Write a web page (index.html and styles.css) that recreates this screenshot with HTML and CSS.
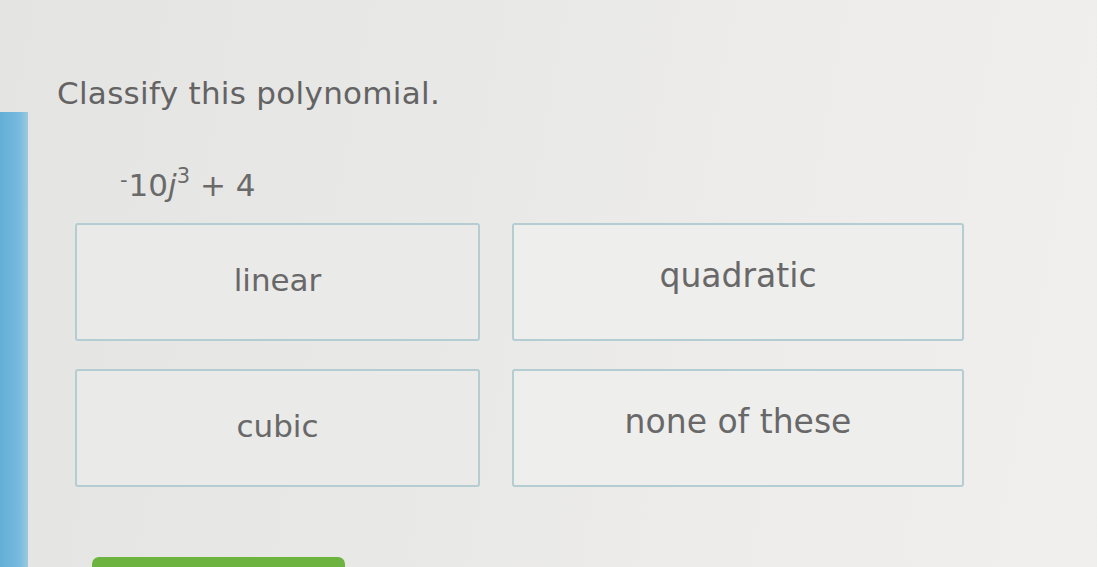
FILE: index.html
```html
<!DOCTYPE html>
<html lang="en">
<head>
  <meta charset="UTF-8">
  <meta name="viewport" content="width=device-width, initial-scale=1.0">
  <title>Classify this polynomial</title>
  <link rel="stylesheet" href="styles.css">
</head>
<body>
  <div class="page">
    <div class="side-strip"></div>

    <div class="question">
      <h1 class="prompt">Classify this polynomial.</h1>

      <!-- Expression -->
      <p class="expression"><sup class="neg">-</sup>10<i>j</i><sup>3</sup> + 4</p>

      <!-- Answer choices -->
      <div class="choices">
        <button class="choice">linear</button>
        <button class="choice">quadratic</button>
        <button class="choice">cubic</button>
        <button class="choice">none of these</button>
      </div>

      <button class="submit-btn" aria-label="Submit"></button>
    </div>
  </div>
</body>
</html>
```

FILE: styles.css
```css
/* Reset and General Styling */
* {
  margin: 0;
  padding: 0;
  box-sizing: border-box;
}

html,
body {
  height: 100%;
  overflow: hidden;
}

body {
  font-family: 'DejaVu Sans', Verdana, sans-serif;
  background: linear-gradient(100deg, #e4e4e3 0%, #e9e9e7 45%, #eeedeb 75%, #f0efed 100%);
  color: #666666;
}

.page {
  display: flex;
  height: 100%;
}

.side-strip {
  flex: 0 0 28px;
  margin-top: 112px;
  background: linear-gradient(90deg, #62aed6 0%, #78bbde 70%, #9cc9df 100%);
}

.question {
  flex: 1;
  padding: 75px 0 0 29px;
}

.prompt {
  font-size: 31px;
  font-weight: normal;
  line-height: 36px;
  color: #636363;
  letter-spacing: 0.3px;
}

.expression {
  margin: 56px 0 0 63px;
  font-size: 31px;
  line-height: 36px;
  height: 36px;
  color: #6a6a6a;
}

.expression i {
  font-style: italic;
}

.expression sup {
  font-size: 21px;
  line-height: 0;
  vertical-align: 13px;
}

.expression sup.neg {
  vertical-align: 9px;
  margin-right: 1px;
}

.choices {
  display: grid;
  grid-template-columns: 405px 452px;
  grid-auto-rows: 118px;
  column-gap: 32px;
  row-gap: 28px;
  margin: 20px 0 0 18px;
}

.choice {
  font-family: inherit;
  font-size: 31px;
  color: #686868;
  background-color: #eaeae8;
  border: 2px solid #b3cdd3;
  border-radius: 3px;
  cursor: pointer;
  padding-bottom: 4px;
}

.choice:nth-child(even) {
  background-color: #eeeeec;
  font-size: 33px;
  padding-bottom: 14px;
}

.choice:hover {
  border-color: #7fb5c4;
}

.submit-btn {
  display: block;
  width: 253px;
  height: 40px;
  margin: 70px 0 0 35px;
  background-color: #6cb33f;
  border: none;
  border-radius: 7px;
  cursor: pointer;
}
```
